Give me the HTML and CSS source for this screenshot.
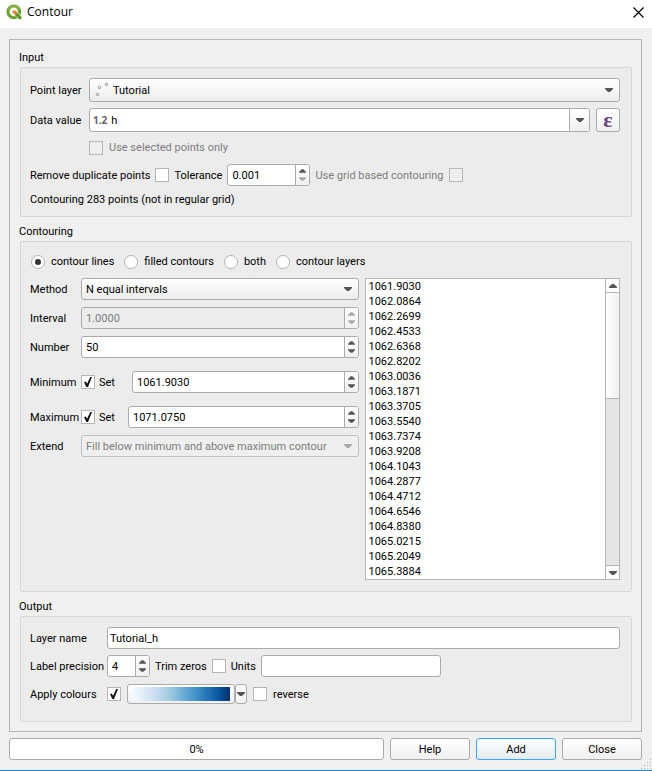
FILE: index.html
```html
<!DOCTYPE html>
<html lang="en">
<head>
    <meta charset="utf-8"/>
    <meta name="viewport" content="width=device-width, initial-scale=1"/>
    <title>Contour</title>

    <link rel="stylesheet" href="styles.css">
</head>

<body>
<!-- shared arrows -->
<svg class="defs" aria-hidden="true">
    <symbol id="down" viewBox="0 0 8 4"><path d="M0 0h8v1L5 4H3L0 1z"/></symbol>
    <symbol id="up" viewBox="0 0 8 4"><path d="M0 4h8V3L5 0H3L0 3z"/></symbol>
</svg>

<header class="titlebar">
    <svg class="logo" viewBox="0 0 16 16">
        <circle cx="7.8" cy="7.8" r="5.8" fill="none" stroke="#6da432" stroke-width="3.2"/>
        <path d="M2.6 5.6A5.8 5.8 0 0 1 12.8 5" fill="none" stroke="#93b545" stroke-width="1.6"/>
        <path d="M8.5 8.5h3l4.3 4.4v2.6h-2.6L8.5 11z" fill="#5c9a2c" stroke="#fff" stroke-width=".6"/>
        <path d="M6.6 6.4h2.8L11 8.1v2.4H8.8L6.6 8.8z" fill="#ee7c2b"/>
    </svg>
    <h1>Contour</h1>
    <button class="close" type="button" aria-label="Close window">
        <svg viewBox="0 0 11 11"><path d="M.5.5l10 10M10.5.5l-10 10" fill="none" stroke="#000" stroke-width="1.2"/></svg>
    </button>
</header>

<form id="contour">
    <main class="panel">
        <h2>Input</h2>
        <section class="group input">
            <div class="row tall">
                <label class="name" for="layer">Point layer</label>
                <div class="combo has-icon">
                    <svg class="points" viewBox="0 0 14 14" fill="#fff" stroke="#777" stroke-width=".8">
                        <circle cx="4.5" cy="5.5" r="1.2"/><circle cx="11.5" cy="2.5" r="1.2"/><circle cx="2.5" cy="12.5" r="1.2"/>
                    </svg>
                    <select id="layer"><option>Tutorial</option></select>
                    <svg class="arrow"><use href="#down"/></svg>
                </div>
            </div>
            <div class="row tall">
                <label class="name" for="value">Data value</label>
                <div class="field grow">
                    <span class="type">1.2</span>
                    <input id="value" type="text" value="h"/>
                    <button class="drop" type="button" aria-label="Fields"><svg><use href="#down"/></svg></button>
                </div>
                <button class="expr" type="button" aria-label="Expression">ε</button>
            </div>
            <div class="row selected">
                <span class="name"></span>
                <input id="selected" type="checkbox" disabled/>
                <label class="off" for="selected">Use selected points only</label>
            </div>
            <div class="row tight">
                <label for="dup">Remove duplicate points</label>
                <input id="dup" type="checkbox"/>
                <label for="tol">Tolerance</label>
                <div class="field spin tol">
                    <input id="tol" type="text" value="0.001"/>
                    <div class="steps">
                        <button type="button" aria-label="Up"><svg><use href="#up"/></svg></button>
                        <button type="button" aria-label="Down" disabled><svg><use href="#down"/></svg></button>
                    </div>
                </div>
                <label class="off" for="grid">Use grid based contouring</label>
                <input id="grid" type="checkbox" disabled/>
            </div>
            <p>Contouring 283 points (not in regular grid)</p>
        </section>

        <h2>Contouring</h2>
        <section class="group contouring">
            <div class="radios">
                <label><input type="radio" name="mode" checked/>contour lines</label>
                <label><input type="radio" name="mode"/>filled contours</label>
                <label><input type="radio" name="mode"/>both</label>
                <label><input type="radio" name="mode"/>contour layers</label>
            </div>
            <div class="columns">
                <div class="settings">
                    <div class="row">
                        <label class="name" for="method">Method</label>
                        <div class="combo">
                            <select id="method"><option>N equal intervals</option></select>
                            <svg class="arrow"><use href="#down"/></svg>
                        </div>
                    </div>
                    <div class="row">
                        <label class="name" for="interval">Interval</label>
                        <div class="field spin grow disabled">
                            <input id="interval" type="text" value="1.0000" disabled/>
                            <div class="steps">
                                <button type="button" aria-label="Up" disabled><svg><use href="#up"/></svg></button>
                                <button type="button" aria-label="Down" disabled><svg><use href="#down"/></svg></button>
                            </div>
                        </div>
                    </div>
                    <div class="row">
                        <label class="name" for="number">Number</label>
                        <div class="field spin grow">
                            <input id="number" type="text" value="50"/>
                            <div class="steps">
                                <button type="button" aria-label="Up"><svg><use href="#up"/></svg></button>
                                <button type="button" aria-label="Down"><svg><use href="#down"/></svg></button>
                            </div>
                        </div>
                    </div>
                    <div class="row limit">
                        <label class="name" for="min">Minimum</label>
                        <input id="setmin" type="checkbox" checked/>
                        <label class="set wide" for="setmin">Set</label>
                        <div class="field spin grow">
                            <input id="min" type="text" value="1061.9030"/>
                            <div class="steps">
                                <button type="button" aria-label="Up"><svg><use href="#up"/></svg></button>
                                <button type="button" aria-label="Down"><svg><use href="#down"/></svg></button>
                            </div>
                        </div>
                    </div>
                    <div class="row limit">
                        <label class="name" for="max">Maximum</label>
                        <input id="setmax" type="checkbox" checked/>
                        <label class="set" for="setmax">Set</label>
                        <div class="field spin grow">
                            <input id="max" type="text" value="1071.0750"/>
                            <div class="steps">
                                <button type="button" aria-label="Up"><svg><use href="#up"/></svg></button>
                                <button type="button" aria-label="Down"><svg><use href="#down"/></svg></button>
                            </div>
                        </div>
                    </div>
                    <div class="row">
                        <label class="name" for="extend">Extend</label>
                        <div class="combo disabled">
                            <select id="extend" disabled><option>Fill below minimum and above maximum contour</option></select>
                            <svg class="arrow"><use href="#down"/></svg>
                        </div>
                    </div>
                </div>
                <div class="levels">
                    <select size="20" aria-label="Contour levels">
                        <option>1061.9030</option>
                        <option>1062.0864</option>
                        <option>1062.2699</option>
                        <option>1062.4533</option>
                        <option>1062.6368</option>
                        <option>1062.8202</option>
                        <option>1063.0036</option>
                        <option>1063.1871</option>
                        <option>1063.3705</option>
                        <option>1063.5540</option>
                        <option>1063.7374</option>
                        <option>1063.9208</option>
                        <option>1064.1043</option>
                        <option>1064.2877</option>
                        <option>1064.4712</option>
                        <option>1064.6546</option>
                        <option>1064.8380</option>
                        <option>1065.0215</option>
                        <option>1065.2049</option>
                        <option>1065.3884</option>
                    </select>
                    <div class="scrollbar">
                        <button type="button" aria-label="Scroll up"><svg><use href="#up"/></svg></button>
                        <div class="track"><div class="thumb"></div></div>
                        <button type="button" aria-label="Scroll down"><svg><use href="#down"/></svg></button>
                    </div>
                </div>
            </div>
        </section>

        <h2>Output</h2>
        <section class="group output">
            <div class="row">
                <label class="name" for="lname">Layer name</label>
                <div class="field grow"><input id="lname" type="text" value="Tutorial_h"/></div>
            </div>
            <div class="row tight">
                <label class="name" for="precision">Label precision</label>
                <div class="field spin precision">
                    <input id="precision" type="text" value="4"/>
                    <div class="steps">
                        <button type="button" aria-label="Up"><svg><use href="#up"/></svg></button>
                        <button type="button" aria-label="Down"><svg><use href="#down"/></svg></button>
                    </div>
                </div>
                <label for="trim">Trim zeros</label>
                <input id="trim" type="checkbox"/>
                <label for="units">Units</label>
                <div class="field units"><input id="units" type="text"/></div>
            </div>
            <div class="row">
                <label class="name" for="apply">Apply colours</label>
                <input id="apply" type="checkbox" checked/>
                <div class="ramp">
                    <button class="colours" type="button" aria-label="Colour ramp"><span></span></button>
                    <button class="more" type="button" aria-label="Ramps"><svg><use href="#down"/></svg></button>
                </div>
                <input id="reverse" type="checkbox"/>
                <label for="reverse">reverse</label>
            </div>
        </section>
    </main>

    <footer class="buttons">
        <div class="progress" role="progressbar" aria-valuenow="0">0%</div>
        <button type="button">Help</button>
        <button class="default" type="button">Add</button>
        <button type="button">Close</button>
    </footer>
</form>
<svg class="grip" viewBox="0 0 10 10">
    <path d="M9 0h1v1H9zM6 3h1v1H6zM9 3h1v1H9zM3 6h1v1H3zM6 6h1v1H6zM9 6h1v1H9zM0 9h1v1H0zM3 9h1v1H3zM6 9h1v1H6zM9 9h1v1H9z"/>
</svg>
</body>
</html>
```
FILE: styles.css
```css
*{
    box-sizing: border-box;
    padding: 0;
    margin: 0;
}

body{
    position: relative;
    min-height: 100vh;
    background: #f0f0f0;
    border-bottom: 1px solid #1883d7;
    color: #000;
    font-family: Roboto, sans-serif;
    font-size: 11px;
    line-height: 16px;
}

input, select, button{
    font: inherit;
    color: inherit;
}

button, select, input[type=text]{
    appearance: none;
    border: 0;
    outline: 0;
    background: none;
}

svg{
    display: block;
    width: 8px;
    height: 4px;
    fill: #555;
}

.defs{
    display: none;
}

/* title bar */
.titlebar{
    display: flex;
    align-items: center;
    height: 28px;
    padding: 0 8px 4px 6px;
    background: #fff;
}

.titlebar h1{
    flex: 1;
    margin-left: 5px;
    font-family: "Open Sans", sans-serif;
    font-size: 12px;
    font-weight: normal;
}

.logo{
    width: 16px;
    height: 16px;
}

.close svg{
    width: 11px;
    height: 11px;
}

/* frame and groups */
.panel{
    margin: 11px 10px 0 9px;
    padding: 9px 8px;
    border: 1px solid #b5b5b5;
}

.panel h2{
    padding: 1px 0 1px 1px;
    font-size: 11px;
    font-weight: normal;
}

.group{
    margin: 0 1px 6px 2px;
    padding: 10px 11px 10px 9px;
    border: 1px solid #d6d6d6;
    border-radius: 2px;
    background: #ececec;
}

.group:last-child{
    margin-bottom: 0;
}

.group.input{
    padding-bottom: 8px;
}

.row{
    display: flex;
    align-items: center;
    gap: 6px;
    height: 22px;
    margin-bottom: 6px;
    white-space: nowrap;
}

.row.tall{
    height: 24px;
}

.row.selected{
    height: 20px;
}

.row.tight{
    gap: 5px;
}

.row label{
    padding-top: 2px;
}

.row.selected label{
    padding-top: 0;
}

.input .name{
    width: 53px;
}

.off{
    color: #7d7d7d;
}

/* text boxes and spin boxes */
.field{
    display: flex;
    align-items: center;
    align-self: stretch;
    border: 1px solid #ababab;
    border-radius: 3px;
    background: #fff;
    overflow: hidden;
}

.field input{
    flex: 1;
    min-width: 0;
    padding: 2px 2px 0;
}

.field.spin input{
    padding: 2px 4px 0;
}

.grow{
    flex: 1;
}

.field.disabled{
    background: #ececec;
    color: #7d7d7d;
}

.type{
    margin: 0 2px 0 3px;
    color: #666;
    font-family: "Noto Sans", sans-serif;
    font-size: 10px;
    font-weight: bold;
}

.drop, .steps{
    display: flex;
    align-items: center;
    justify-content: center;
    align-self: stretch;
    width: 20px;
    border-left: 1px solid #ababab;
    background: linear-gradient(#fff, #f0f0f0);
}

.steps{
    flex-direction: column;
    gap: 4px;
    width: 14px;
}

.steps svg{
    width: 7px;
}

.steps button:disabled svg{
    fill: #a8a8a8;
}

.expr, .colours, .more, .buttons button{
    border: 1px solid #ababab;
    border-radius: 3px;
    background: linear-gradient(#fff, #f0f0f0);
}

.expr{
    width: 24px;
    height: 24px;
    color: #68417a;
    font-family: "Liberation Serif", serif;
    font-size: 22px;
    font-weight: bold;
    line-height: 16px;
}

.tol{
    width: 83px;
}

/* drop-downs */
.combo{
    position: relative;
    flex: 1;
    align-self: stretch;
    min-width: 0;
}

.combo select{
    width: 100%;
    height: 100%;
    padding: 2px 20px 0 4px;
    border: 1px solid #ababab;
    border-radius: 3px;
    background: linear-gradient(#fff, #ececec);
}

.combo.has-icon select{
    padding-left: 23px;
}

.combo .arrow{
    position: absolute;
    top: 50%;
    right: 7px;
    margin-top: -2px;
    pointer-events: none;
}

.combo .points{
    position: absolute;
    top: 4px;
    left: 6px;
    width: 14px;
    height: 14px;
    fill: #fff;
}

.combo.disabled select{
    border-color: #c0c0c0;
    background: #efefef;
    color: #7d7d7d;
    opacity: 1;
}

.combo.disabled .arrow{
    fill: #a8a8a8;
}

/* tick boxes and radios */
input[type=checkbox], input[type=radio]{
    flex: none;
    appearance: none;
    display: flex;
    align-items: center;
    justify-content: center;
    width: 14px;
    height: 14px;
    border: 1px solid #b5b5b5;
    background: #fff;
}

input[type=checkbox]:disabled{
    background: #efefef;
}

input[type=checkbox]:checked::before{
    content: "";
    width: 8px;
    height: 10px;
    background: #111;
    clip-path: polygon(0 52%, 22% 46%, 38% 68%, 78% 0, 100% 0, 50% 100%, 30% 100%);
}

input[type=radio]{
    border-radius: 50%;
}

input[type=radio]:checked::before{
    content: "";
    width: 6px;
    height: 6px;
    border-radius: 50%;
    background: #333;
}

.radios{
    display: flex;
    align-items: center;
    gap: 10px;
    height: 20px;
    margin-bottom: 6px;
    padding-left: 1px;
}

.radios label{
    display: flex;
    align-items: center;
    gap: 6px;
}

/* contouring */
.contouring{
    padding-bottom: 11px;
}

.columns{
    display: grid;
    grid-template-columns: 9fr 7fr;
    gap: 6px;
}

.settings .row{
    margin-bottom: 7px;
}

.settings .name{
    width: 45px;
}

.settings .limit{
    gap: 4px;
    margin-top: 13px;
}

.settings .limit .name{
    width: 47px;
}

.set{
    width: 25px;
}

.set.wide{
    width: 29px;
}

.levels{
    display: flex;
    border: 1px solid #b5b5b5;
    background: #fff;
}

.levels select{
    flex: 1;
    height: 300px;
    padding-top: 1px;
    overflow: hidden;
    scrollbar-width: none;
}

.levels option{
    height: 15px;
    min-height: 15px;
    padding: 0 3px;
    line-height: 15px;
}

.scrollbar{
    display: flex;
    flex-direction: column;
    width: 14px;
    border-left: 1px solid #b5b5b5;
    background: #e5e5e5;
}

.scrollbar button{
    display: flex;
    align-items: center;
    justify-content: center;
    height: 14px;
    background: #fcfcfc;
    border-bottom: 1px solid #b5b5b5;
}

.scrollbar button:last-child{
    border-top: 1px solid #b5b5b5;
    border-bottom: 0;
}

.track{
    flex: 1;
}

.thumb{
    height: 39%;
    border-bottom: 1px solid #b5b5b5;
    background: linear-gradient(to right, #fff, #f0f0f0);
}

/* output */
.output .name{
    width: 71px;
}

.output .tight .name{
    width: 72px;
}

.output .row:last-child{
    margin-bottom: 6px;
}

.precision{
    width: 43px;
}

.units{
    width: 180px;
}

.ramp{
    display: flex;
    height: 20px;
}

.colours{
    width: 108px;
    padding: 2px 4px;
}

.colours span{
    display: block;
    height: 14px;
    background: linear-gradient(to right, #f7fbff, #deebf7 13%, #c6dbef 26%, #9ecae1 39%, #6baed6 52%, #4292c6 65%, #2171b5 78%, #08519c 90%, #08306b);
}

.more{
    display: flex;
    align-items: center;
    justify-content: center;
    width: 12px;
}

/* bottom bar */
.buttons{
    display: flex;
    gap: 6px;
    margin: 6px 10px 10px 9px;
}

.progress{
    flex: 1;
    height: 22px;
    padding-top: 1px;
    border: 1px solid #ababab;
    border-radius: 3px;
    background: #fff;
    line-height: 20px;
    text-align: center;
}

.buttons button{
    width: 80px;
    height: 22px;
    padding-top: 2px;
}

.buttons .default{
    border-color: #3ca5f5;
    background: linear-gradient(#fff, #e6ecf1);
}

.grip{
    position: absolute;
    right: 1px;
    bottom: 1px;
    width: 10px;
    height: 10px;
    fill: #b5b5b5;
}
```
